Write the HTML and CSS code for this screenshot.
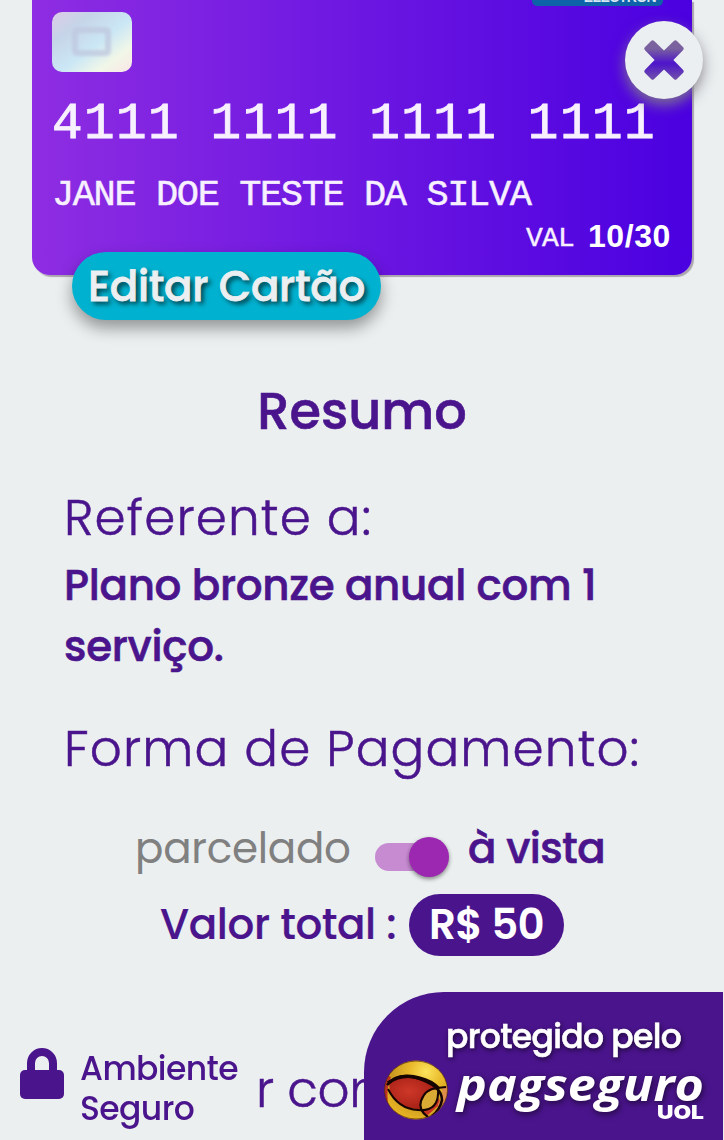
FILE: index.html
```html
<!DOCTYPE html>
<html lang="pt-BR">
<head>
<meta charset="utf-8">
<title>Resumo</title>
<link rel="stylesheet" href="styles.css">
</head>
<body>
<main class="page">
  <section class="card">
    <div class="brand">ELECTRON</div>
    <svg class="chip" viewBox="0 0 80 60">
      <defs>
        <linearGradient id="holo" x1="0" y1="0" x2="1" y2="1">
          <stop offset="0" stop-color="#dccbe6"/><stop offset=".25" stop-color="#c6d4e8"/>
          <stop offset=".55" stop-color="#cbe7f5"/><stop offset=".78" stop-color="#f1f7e8"/><stop offset="1" stop-color="#fae5e6"/>
        </linearGradient>
        <filter id="soft" x="-20%" y="-20%" width="140%" height="140%"><feGaussianBlur stdDeviation="1.5"/></filter>
      </defs>
      <rect width="80" height="60" rx="10" fill="url(#holo)"/>
      <rect x="23" y="18" width="33" height="23" rx="2" fill="none" stroke="#bfc8df" stroke-opacity=".8" stroke-width="6" filter="url(#soft)"/>
    </svg>
    <div class="number">4111 1111 1111 1111</div>
    <div class="holder">JANE DOE TESTE DA SILVA</div>
    <div class="valid"><span class="val">VAL</span><span class="date">10/30</span></div>
    <button class="close" aria-label="Fechar">
      <svg viewBox="0 0 40 40" width="40" height="40">
        <defs><linearGradient id="cross" x1="0" y1="0" x2="0" y2="1"><stop offset="0" stop-color="#7d659f"/><stop offset=".22" stop-color="#79609f"/><stop offset=".58" stop-color="#4d14cb"/><stop offset="1" stop-color="#7153a8"/></linearGradient></defs>
        <path fill="url(#cross)" d="M7.3 .8Q8.600 -.4 9.900 .8L20 10.600 30.100 .8Q31.400 -.4 32.700 .8L39.200 7.300Q40.400 8.600 39.200 9.900L29.400 20 39.200 30.100Q40.400 31.400 39.200 32.700L32.700 39.200Q31.400 40.400 30.100 39.200L20 29.400 9.900 39.200Q8.600 40.400 7.300 39.200L.8 32.700Q-.4 31.400 .8 30.100L10.600 20 .8 9.900Q-.4 8.600 .8 7.300Z"/>
      </svg>
    </button>
  </section>
  <button class="edit"><span>Editar Cartão</span></button>
  <section class="summary">
    <h1 class="title"><span>Resumo</span></h1>
    <h2 class="label ref">Referente a:</h2>
    <p class="plan">Plano bronze anual com 1 serviço.</p>
    <h2 class="label pay">Forma de Pagamento:</h2>
    <div class="mode">
      <span class="parcel">parcelado</span>
      <span class="switch"><span class="thumb"></span></span>
      <span class="cash">à vista</span>
    </div>
    <div class="total"><span class="total-label">Valor total :</span><span class="amount">R$ 50</span></div>
    <p class="label more">r com</p>
  </section>
</main>
<footer class="footer">
  <div class="safe">
    <svg viewBox="0 0 44 52" width="44" height="52">
      <path d="M11 25V15a11 11 0 0 1 22 0v10" fill="none" stroke="#4a148c" stroke-width="8"/>
      <rect y="22" width="44" height="29" rx="5" fill="#4a148c"/>
    </svg>
    <div class="safe-text">Ambiente<br>Seguro</div>
  </div>
  <div class="pag">
    <span class="protected">protegido pelo</span>
    <svg class="logo" viewBox="0 0 322 66" width="322" height="66">
      <defs>
        <radialGradient id="gold" gradientUnits="userSpaceOnUse" cx="42" cy="12" r="56"><stop offset="0" stop-color="#fbe45c"/><stop offset=".3" stop-color="#e9b92a"/><stop offset=".6" stop-color="#c99a20"/><stop offset="1" stop-color="#f4bd25"/></radialGradient>
        <radialGradient id="red" cx=".4" cy=".45" r=".6"><stop offset="0" stop-color="#ce3828"/><stop offset="1" stop-color="#a51f16"/></radialGradient>
        <clipPath id="ball"><ellipse cx="32" cy="30" rx="31.500" ry="29.500"/></clipPath>
      </defs>
      <g clip-path="url(#ball)">
        <rect width="64" height="64" fill="url(#gold)"/>
        <path d="M0 14L7 17Q2 28 4 44L0 42Z" fill="#bd3423"/>
        <path d="M5 22Q22 14 36 18Q47 21 54 29Q38 33 36 49Q16 50 6 33Z" fill="url(#red)"/>
        <path d="M37 49Q48 49 55 38L56 44 44 55Q38 53 37 49Z" fill="#c93524"/>
        <path d="M58 28L64 26V40L55 52 54 44Q60 36 58 28Z" fill="#df8d4a"/>
        <path d="M37 48Q36 31 54 29Q55 44 44 49Q40 50 37 48Z" fill="#d9aa34"/>
        <path d="M3 25Q14 12 33 18Q58 26 58 40Q56 50 48 56" fill="none" stroke="#160400" stroke-width="2.600"/>
        <path d="M4 23Q18 13 35 18Q48 21 55 29" fill="none" stroke="#160400" stroke-width="3.500"/>
        <path d="M4 29Q14 49 34 50Q56 52 54 28" fill="none" stroke="#160400" stroke-width="2"/>
        <path d="M44 57Q34 50 37 41Q41 29 53 28L62 27" fill="none" stroke="#160400" stroke-width="2.200"/>
      </g>
      <ellipse cx="32" cy="30" rx="31.500" ry="29" fill="none" stroke="#3a1200" stroke-opacity=".6"/>
      <text class="logo-name" x="73" y="41" textLength="247" lengthAdjust="spacingAndGlyphs">pagseguro</text>
      <text class="logo-uol" x="273" y="59" textLength="47" lengthAdjust="spacingAndGlyphs">UOL</text>
    </svg>
  </div>
</footer>
</body>
</html>
```
FILE: styles.css
```css
* { box-sizing: border-box; }
html, body { height: 100%; }
body {
  margin: 0;
  overflow: hidden;
  background: #ebeff0;
  color: #4a148c;
  font-family: "Poppins", "Inter", sans-serif;
}
button { border: 0; padding: 0; font: inherit; }
h1, h2, p { margin: 0; }
.page { height: 1140px; overflow: hidden; }

.card {
  position: relative;
  width: 660px;
  height: 275px;
  margin-left: 32px;
  padding: 12px 20px 0;
  border-radius: 0 0 18px 18px;
  background: linear-gradient(90deg, #8e2de2, #4a00e0);
  box-shadow: 2px 2px 1px #aaa4ad;
  color: #f7f0ff;
  font-family: "Liberation Mono", monospace;
  white-space: nowrap;
}
.brand {
  position: absolute;
  right: 29px;
  top: -34px;
  width: 131px;
  height: 40px;
  padding: 21px 7px 0 0;
  border-radius: 5px;
  background: #0d62a8;
  color: #d6e6f3;
  font: bold 14px/20px "Liberation Sans", sans-serif;
  text-align: right;
  letter-spacing: -.6px;
}
.chip { display: block; width: 80px; height: 60px; }
.number { margin-top: 23px; height: 60px; font-size: 51px; line-height: 60px; letter-spacing: 1.4px; word-spacing: -1.4px; -webkit-text-stroke: .9px; }
.holder { margin-top: 20px; height: 40px; font-size: 37px; line-height: 40px; letter-spacing: -1.4px; -webkit-text-stroke: .5px; }
.valid { display: flex; justify-content: flex-end; gap: 14px; margin-top: 1px; padding-right: 1px; height: 40px; line-height: 45px; }
.val { font-size: 28px; letter-spacing: -.8px; -webkit-text-stroke: .4px; }
.date { font: bold 32px/41px "Liberation Sans", sans-serif; letter-spacing: .6px; color: #fff; }
.close {
  position: absolute;
  left: 593px;
  top: 21px;
  display: grid;
  place-items: center;
  width: 78px;
  height: 78px;
  border-radius: 50%;
  background: #ebeff1;
  box-shadow: 0 6px 14px rgba(130, 125, 135, .9);
}
.close svg { overflow: visible; }

.edit {
  position: relative;
  display: flex;
  align-items: center;
  justify-content: center;
  width: 309px;
  height: 68px;
  margin: -23px 0 0 72px;
  border-radius: 34px;
  background: #00b2d0;
  box-shadow: 0 8px 16px rgba(0, 0, 0, .38);
  color: #ebeff1;
  font-size: 42px;
  font-weight: 500;
  letter-spacing: -.3px;
  -webkit-text-stroke: .8px;
  white-space: nowrap;
  text-shadow: 3px 3px 5px rgba(0, 0, 0, .7);
}

.summary { padding-left: 64px; white-space: nowrap; }
.title { margin: 61px 64px 0 0; font-size: 51px; font-weight: 500; line-height: 60px; text-align: center; -webkit-text-stroke: .6px; }
.label { font-size: 50px; font-weight: 300; line-height: 74px; letter-spacing: 1.15px; -webkit-text-stroke: .5px; }
.ref { margin-top: 40px; }
.plan { font-size: 42px; font-weight: 500; line-height: 61px; width: 560px; white-space: normal; letter-spacing: -.3px; -webkit-text-stroke: .6px; }
.pay { margin-top: 35px; }
.mode { display: flex; align-items: center; height: 60px; margin: 33px 0 0 71px; font-size: 42px; line-height: 60px; }
.parcel { width: 240px; color: #808080; font-weight: 400; letter-spacing: -.25px; }
.switch { width: 72px; height: 28px; margin-top: 16px; border-radius: 14px; background: #c78bd2; }
.thumb { display: block; width: 40px; height: 40px; margin: -6px 0 0 34px; border-radius: 50%; background: #9c27b0; box-shadow: 0 2px 4px rgba(0, 0, 0, .45); }
.cash { margin-left: 21px; font-weight: 500; letter-spacing: -.6px; -webkit-text-stroke: .6px; }
.total { display: flex; height: 62px; margin: 15px 0 0 96px; font-size: 42px; line-height: 62px; font-weight: 500; }
.total-label { width: 249px; letter-spacing: -.4px; -webkit-text-stroke: .2px; }
.amount { width: 155px; border-radius: 31px; background: #4a148c; color: #fff; font-weight: 600; text-align: center; letter-spacing: -.7px; }
.more { margin: 97px 0 0 192px; letter-spacing: -.3px; }

.footer { position: fixed; left: 0; right: 0; bottom: 0; display: flex; justify-content: space-between; height: 148px; padding-right: 1px; white-space: nowrap; }
.safe { display: flex; gap: 16px; width: 250px; padding: 56px 0 0 20px; font-size: 33px; line-height: 40px; font-weight: 500; letter-spacing: -.6px; }
.safe-text { padding-top: 1px; }
.pag { display: flex; flex-direction: column; align-items: flex-start; width: 359px; border-top-left-radius: 80px; background: #4a148c; }
.protected { margin: 25px 0 0 82px; color: #fff; font-size: 33px; line-height: 40px; font-weight: 500; letter-spacing: -.65px; -webkit-text-stroke: .6px; text-shadow: 1px 2px 5px rgba(0, 0, 0, .7); }
.logo { display: block; margin: 3px 0 0 20px; overflow: visible; }
.logo-name, .logo-uol { fill: #fff; font-family: "Open Sans", sans-serif; font-weight: 700; font-style: italic; font-size: 44px; filter: drop-shadow(1px 2px 3px rgba(0, 0, 0, .6)); }
.logo-uol { font-family: "Inter", sans-serif; font-weight: 900; font-style: normal; font-size: 19px; filter: none; }
```
